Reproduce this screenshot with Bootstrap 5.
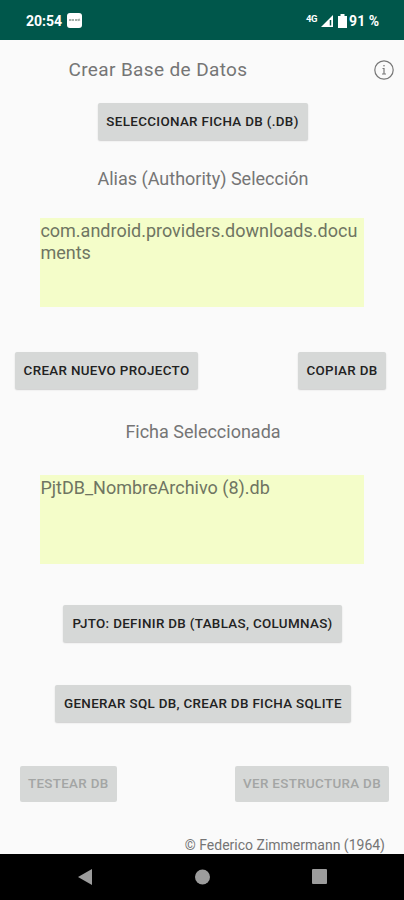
<!DOCTYPE html>
<html lang="es">
<head>
<meta charset="utf-8">
<meta name="viewport" content="width=device-width, initial-scale=1">
<title>Crear Base de Datos</title>
<link href="https://cdn.jsdelivr.net/npm/bootstrap@5.3.0/dist/css/bootstrap.min.css" rel="stylesheet">
<style>
body{font-family:Roboto,sans-serif;background:#fafafa;color:#757575;height:900px;overflow:hidden}
.statusbar{height:39.5px;background:#00574b;color:#fff;font-size:14px;font-weight:700;padding:2px 25px 0 26px;line-height:20px}
.net{font-size:9.5px;letter-spacing:-.4px;line-height:14px;margin-top:-4px}
.screen{height:814px}
.heading{font-size:18px;line-height:22px;white-space:nowrap}
.titlebar{padding:0 10px 0 68.5px;height:22px;margin-top:19.5px}
.titlebar .heading{font-size:19px;letter-spacing:.37px}
.field{width:324px;height:88.5px;margin-left:40.4px;background:#f4fdc9;font-size:18px;line-height:21.5px;padding-top:2px;word-break:break-all;color:#6f7562}
.key{--bs-btn-bg:#d6d8d7;--bs-btn-color:#222;--bs-btn-border-width:0;--bs-btn-border-radius:2px;--bs-btn-disabled-bg:#d6d8d7;--bs-btn-disabled-color:#a3a5a4;--bs-btn-disabled-opacity:1;--bs-btn-font-weight:500;--bs-btn-padding-x:0;--bs-btn-padding-y:0;font-size:13.4px;letter-spacing:.33px;line-height:18px;height:37px;white-space:nowrap;box-shadow:0 1px 1.5px rgba(0,0,0,.18)}
.key:disabled{box-shadow:none;height:36px}
.w-a{width:210px}.w-b{width:183px}.w-c{width:88px}.w-d{width:279px}.w-e{width:296px}.w-f{width:96.5px}.w-g{width:154px}
.credit{font-size:14px;line-height:16px;padding-right:19px;padding-bottom:1px}
.navkeys{height:46.5px;padding:0 76px 0 77px}
.pick-row{margin:22px 0 0 97.5px;height:36.5px}
.alias-label{margin:28.5px 0 0 2px}
.alias-field{margin-top:28px}
.project-row{margin:45.5px 18px 0 15px}
.file-label{margin:32px 0 0 2px}
.file-field{margin-top:32px}
.define-row{margin:41.5px 0 0 63px;height:37px}
.generate-row{margin:43px 0 0 55px;height:37px}
.test-row{margin:43.5px 15px 0 20px}
</style>
<script src="https://cdn.jsdelivr.net/npm/bootstrap@5.3.0/dist/js/bootstrap.bundle.min.js"></script>
</head>
<body class="d-flex flex-column">
<header class="statusbar d-flex align-items-center justify-content-between flex-shrink-0">
  <div class="d-flex align-items-center"><span>20:54</span>
    <svg class="ms-1" width="17" height="17" viewBox="0 0 17 17"><rect x="1" y="1" width="15" height="15" rx="3" fill="#fff"/><path d="M3 8h2.500M6 8h2M9 8h2M11.500 8.300l2.500-.8" stroke="#a5b0aa" stroke-width="2"/></svg>
  </div>
  <div class="d-flex align-items-center"><span class="net">4G</span>
    <svg class="ms-1" width="28" height="16" viewBox="0 0 28 16"><path d="M0 14 12 2v12Z" fill="#fff"/><path d="M9.500 7v5.500" stroke="#00574b" stroke-width="1.500"/><path d="M17 3h2.500V1h4v2H26v12h-9Z" fill="#fff"/></svg>
    <span>91 %</span>
  </div>
</header>
<main class="screen d-flex flex-column flex-shrink-0">
  <div class="titlebar d-flex align-items-center justify-content-between">
    <h1 class="heading fw-normal m-0">Crear Base de Datos</h1>
    <svg width="20" height="20" viewBox="0 0 20 20" fill="none" stroke="#777"><circle cx="10" cy="10" r="9.200" stroke-width="1.200"/><path d="M8.500 8.500H10v5.500M8 14h4" stroke-width="1.200"/><circle cx="10" cy="5.700" r=".8" fill="#777" stroke="none"/></svg>
  </div>
  <div class="pick-row"><button class="btn key w-a" type="button">SELECCIONAR FICHA DB (.DB)</button></div>
  <h2 class="heading fw-normal text-center alias-label">Alias (Authority) Selección</h2>
  <div class="field alias-field">com.android.providers.downloads.documents</div>
  <div class="project-row d-flex justify-content-between"><button class="btn key w-b" type="button">CREAR NUEVO PROJECTO</button><button class="btn key w-c" type="button">COPIAR DB</button></div>
  <h2 class="heading fw-normal text-center file-label">Ficha Seleccionada</h2>
  <div class="field file-field">PjtDB_NombreArchivo (8).db</div>
  <div class="define-row"><button class="btn key w-d" type="button">PJTO: DEFINIR DB (TABLAS, COLUMNAS)</button></div>
  <div class="generate-row"><button class="btn key w-e" type="button">GENERAR SQL DB, CREAR DB FICHA SQLITE</button></div>
  <div class="test-row d-flex justify-content-between"><button class="btn key w-f" type="button" disabled>TESTEAR DB</button><button class="btn key w-g" type="button" disabled>VER ESTRUCTURA DB</button></div>
  <footer class="credit text-end mt-auto">© Federico Zimmermann (1964)</footer>
</main>
<nav class="navkeys bg-black d-flex align-items-center justify-content-between flex-shrink-0">
  <svg width="16" height="18" viewBox="0 0 16 18"><path d="M1 9 15 1v16Z" fill="#9c9c9c"/></svg>
  <svg width="16" height="16" viewBox="0 0 16 16"><circle cx="8.500" cy="8" r="7.500" fill="#9c9c9c"/></svg>
  <svg width="17" height="17" viewBox="0 0 17 17"><rect x="1" y="1" width="15" height="15" rx="1" fill="#9c9c9c"/></svg>
</nav>
</body>
</html>
